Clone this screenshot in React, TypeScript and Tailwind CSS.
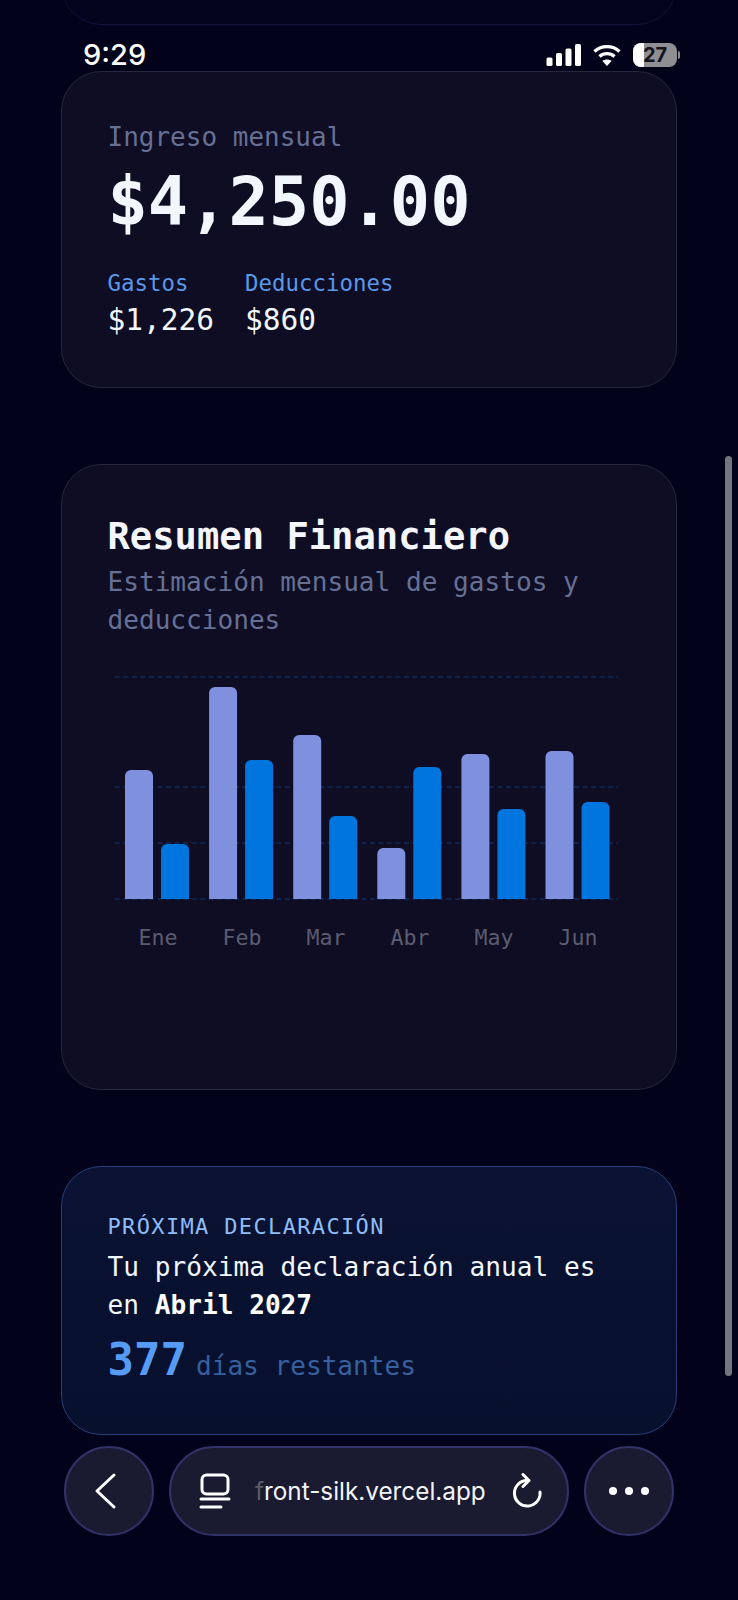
import React from 'react';

const mono = { fontFamily: '"DejaVu Sans Mono", "Liberation Mono", monospace' };

const months = [
  { label: 'Ene', a: 770, b: 844 },
  { label: 'Feb', a: 687, b: 760 },
  { label: 'Mar', a: 735, b: 816 },
  { label: 'Abr', a: 848, b: 767 },
  { label: 'May', a: 754, b: 809 },
  { label: 'Jun', a: 751, b: 802 },
];

// chart svg starts at page y 670, x 108
const Y0 = 670;
const BASE = 899;

const Bar = ({ x, top, fill }: { x: number; top: number; fill: string }) => {
  const y = top - Y0;
  const h = BASE - top;
  return (
    <path
      d={`M${x} ${y + h}V${y + 6}a6 6 0 0 1 6-6h16a6 6 0 0 1 6 6V${y + h}z`}
      fill={fill}
    />
  );
};

const Chart = () => (
  <svg width="522" height="235" viewBox="0 0 522 235" className="block">
    {[677, 787, 843, 899].map((y) => (
      <line
        key={y}
        x1="7"
        x2="510"
        y1={y - Y0}
        y2={y - Y0}
        stroke="#132a5c"
        strokeWidth="1.5"
        strokeDasharray="5 3.5"
      />
    ))}
    {months.map((m, i) => (
      <g key={m.label}>
        <Bar x={17 + i * 84.1} top={m.a} fill="#7f90de" />
        <Bar x={53 + i * 84.1} top={m.b} fill="#0075de" />
      </g>
    ))}
  </svg>
);

const StatusIcons = () => (
  <div className="flex items-center">
    <svg width="36" height="24" viewBox="0 0 36 24" fill="#fff">
      <rect x="0.5" y="14.5" width="6" height="8.5" rx="1.6" />
      <rect x="10" y="10" width="6" height="13" rx="1.6" />
      <rect x="19.5" y="5.5" width="6" height="17.5" rx="1.6" />
      <rect x="29" y="1" width="6" height="22" rx="1.6" />
    </svg>
    <svg width="30" height="24" viewBox="0 0 30 24" className="ml-[10px]" fill="none" stroke="#fff" strokeWidth="3.4">
      <path d="M2.5 8.5c7-6.5 18-6.5 25 0" />
      <path d="M7.5 13.5c4.2-3.8 10.8-3.8 15 0" />
      <path d="M15 23l-4.6-5c2.6-2 6.6-2 9.2 0z" fill="#fff" stroke="none" />
    </svg>
    <div className="relative ml-[11px] flex h-[24px] w-[44px] items-center justify-center overflow-hidden rounded-[8px] bg-[#8e8e93]">
      <div className="absolute top-0 bottom-0 left-0 w-[11px] bg-white" />
      <span className="relative text-[20px] leading-none font-bold text-[#14141c]" style={{ fontFamily: 'Inter, sans-serif' }}>
        27
      </span>
    </div>
    <div className="ml-[1px] h-[8px] w-[2px] rounded-r-full bg-[#8e8e93]" />
  </div>
);

export default function App() {
  return (
    <div className="relative h-[1600px] w-[738px] overflow-hidden bg-[#02021a]" style={mono}>
      {/* page content, scrolled */}
      <div className="flex flex-col px-[61px]">
        <div className="mt-[-100px] mb-[46px] h-[125px] rounded-[40px] border border-[#12123a] bg-[#04041e]" />

        <section className="rounded-[40px] border-[1.5px] border-[#26273c] bg-[#0e0d23] px-[45.5px] pt-[45.5px] pb-[48px]">
          <p className="text-[26px] leading-[38px] text-[#667095]">Ingreso mensual</p>
          <p className="mt-[6px] text-[67px] leading-[80px] font-bold text-[#f2f6fd]">$4,250.00</p>
          <div className="mt-[26px] flex gap-[31px]">
            <div>
              <p className="text-[22.4px] leading-[30px] text-[#5a98ea]">Gastos</p>
              <p className="mt-[3px] text-[29.5px] leading-[38px] text-[#f2f6fd]">$1,226</p>
            </div>
            <div>
              <p className="text-[22.4px] leading-[30px] text-[#5a98ea]">Deducciones</p>
              <p className="mt-[3px] text-[29.5px] leading-[38px] text-[#f2f6fd]">$860</p>
            </div>
          </div>
        </section>

        <section className="mt-[76px] rounded-[40px] border-[1.5px] border-[#26273c] bg-[#0e0d23] px-[45.5px] pt-[49.5px] pb-[136px]">
          <h2 className="text-[37.15px] leading-[46px] font-bold text-[#f4f6fb]">Resumen Financiero</h2>
          <p className="mt-[3px] text-[26.1px] leading-[38px] text-[#667095]">
            Estimación mensual de gastos y deducciones
          </p>
          <div className="mt-[31px]">
            <Chart />
          </div>
          <div className="mt-[18px] ml-[8.5px] grid w-[504px] grid-cols-6">
            {months.map((m) => (
              <span key={m.label} className="text-center text-[21.6px] leading-[30px] text-[#5c5c70]">
                {m.label}
              </span>
            ))}
          </div>
        </section>

        <section className="mt-[76px] rounded-[40px] border-[1.5px] border-[#25407a] bg-gradient-to-b from-[#0b1233] to-[#07102d] px-[45.5px] pt-[45px] pb-[49px]">
          <p className="text-[22px] leading-[30px] tracking-[1.35px] text-[#8fbdf7]">PRÓXIMA DECLARACIÓN</p>
          <p className="mt-[6px] text-[26.15px] leading-[38px] text-[#f2f6fd]">
            Tu próxima declaración anual es en <strong className="font-bold text-white">Abril 2027</strong>
          </p>
          <div className="mt-[11px] flex items-baseline gap-[9px]">
            <span className="text-[44px] leading-[50px] font-bold text-[#569cf6]">377</span>
            <span className="text-[26.1px] leading-[38px] text-[#36609f]">días restantes</span>
          </div>
        </section>
      </div>

      {/* status bar */}
      <div className="absolute top-[43px] right-[58px] left-[83px] flex items-center justify-between">
        <span className="text-[29px] leading-[24px] font-medium text-white" style={{ fontFamily: 'Inter, sans-serif' }}>
          9:29
        </span>
        <StatusIcons />
      </div>

      {/* browser scrollbar */}
      <div className="absolute top-[456px] left-[725px] h-[920px] w-[7px] rounded-full bg-[#75757f]" />

      {/* browser toolbar */}
      <div className="absolute top-[1446px] left-[64px] flex gap-[15px]" style={{ fontFamily: 'Inter, sans-serif' }}>
        <button className="flex h-[90px] w-[90px] items-center justify-center rounded-full border-2 border-[#32326a] bg-[#1a1a30]">
          <svg width="24" height="38" viewBox="0 0 24 38" fill="none" stroke="#fff" strokeWidth="3" strokeLinecap="round" strokeLinejoin="round" className="mr-[6px]">
            <path d="M20 3L3 19l17 16" />
          </svg>
        </button>
        <div className="flex h-[90px] w-[400px] items-center rounded-[45px] border-2 border-[#32326a] bg-[#1a1a30] pr-[24px] pl-[28px]">
          <svg width="32" height="36" viewBox="0 0 32 36" fill="none" stroke="#fff" strokeWidth="3" strokeLinecap="round">
            <rect x="3" y="2" width="26" height="19" rx="4.5" />
            <path d="M2 26h28" />
            <path d="M2 34h20" />
          </svg>
          <span className="ml-[24px] text-[24.3px] leading-none text-[#f4f4f8]">
            <span className="text-white/30">f</span>ront-silk.vercel.app
          </span>
          <svg width="32" height="36" viewBox="0 0 32 36" fill="none" stroke="#fff" strokeWidth="3" strokeLinecap="round" strokeLinejoin="round" className="ml-auto">
            <path d="M15 7.5A12.8 12.8 0 1 0 29 19" />
            <path d="M12 1.5l6 6-6 6" />
          </svg>
        </div>
        <button className="flex h-[90px] w-[90px] items-center justify-center gap-[8px] rounded-full border-2 border-[#32326a] bg-[#1a1a30]">
          <span className="h-[8px] w-[8px] rounded-full bg-white" />
          <span className="h-[8px] w-[8px] rounded-full bg-white" />
          <span className="h-[8px] w-[8px] rounded-full bg-white" />
        </button>
      </div>
    </div>
  );
}
